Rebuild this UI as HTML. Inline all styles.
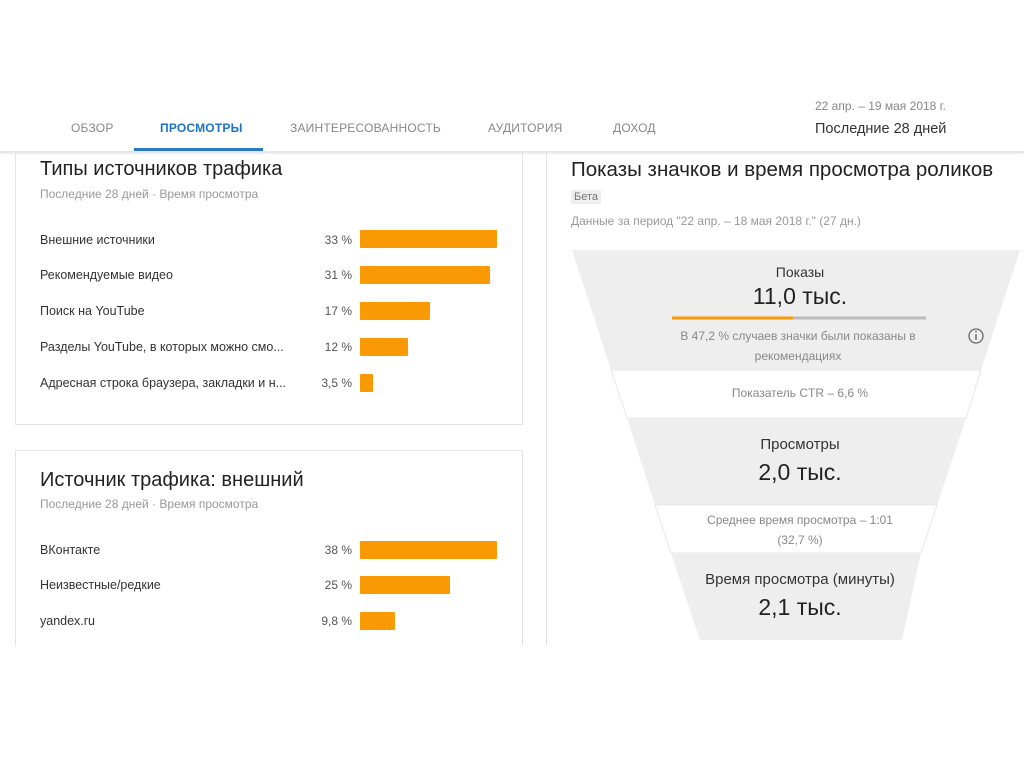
<!DOCTYPE html>
<html><head><meta charset="utf-8"><style>
*{margin:0;padding:0;box-sizing:border-box}
body{width:1024px;height:767px;background:#fff;font-family:"Liberation Sans",sans-serif;position:relative;overflow:hidden;color:#222}
.a{position:absolute;white-space:nowrap}
.tab{position:absolute;top:121px;font-size:12px;color:#888;letter-spacing:.2px}
.card{position:absolute;left:15px;width:508px;border:1px solid #e4e4e4;border-top:none}
.t{font-size:20px;color:#222}
.s{font-size:12px;color:#999}
.l{font-size:12.5px;color:#333}
.p{font-size:12px;color:#555;text-align:right;width:60px}
.bar{position:absolute;left:360px;height:18px;background:#f99a05;border-radius:1px}
</style></head><body>
<div class="tab" style="left:71px">ОБЗОР</div>
<div class="tab" style="left:160px;color:#1a73c8;font-weight:bold">ПРОСМОТРЫ</div>
<div class="tab" style="left:290px">ЗАИНТЕРЕСОВАННОСТЬ</div>
<div class="tab" style="left:488px">АУДИТОРИЯ</div>
<div class="tab" style="left:613px">ДОХОД</div>
<div class="a" style="left:134px;top:148px;width:129px;height:3px;background:#2a7ac4"></div>
<div class="a" style="left:815px;top:99px;font-size:12px;color:#888">22 апр. – 19 мая 2018 г.</div>
<div class="a" style="left:815px;top:121px;font-size:14.5px;color:#333">Последние 28 дней</div>
<div class="a" style="left:0;top:151px;width:1024px;height:2px;background:#e6e6e6;box-shadow:0 1px 2px rgba(0,0,0,.08)"></div>

<div class="card" style="top:153px;height:272px"></div>
<div class="a t" style="left:40px;top:158px">Типы источников трафика</div>
<div class="a s" style="left:40px;top:187px">Последние 28 дней · Время просмотра</div>
<div class="a l" style="left:40px;top:233px">Внешние источники</div>
<div class="a l" style="left:40px;top:268px">Рекомендуемые видео</div>
<div class="a l" style="left:40px;top:304px">Поиск на YouTube</div>
<div class="a l" style="left:40px;top:340px">Разделы YouTube, в которых можно смо...</div>
<div class="a l" style="left:40px;top:376px">Адресная строка браузера, закладки и н...</div>
<div class="a p" style="left:292px;top:233px">33 %</div>
<div class="a p" style="left:292px;top:268px">31 %</div>
<div class="a p" style="left:292px;top:304px">17 %</div>
<div class="a p" style="left:292px;top:340px">12 %</div>
<div class="a p" style="left:292px;top:376px">3,5 %</div>
<div class="bar" style="top:230px;width:137px"></div>
<div class="bar" style="top:266px;width:130px"></div>
<div class="bar" style="top:302px;width:70px"></div>
<div class="bar" style="top:338px;width:48px"></div>
<div class="bar" style="top:374px;width:13px"></div>

<div class="card" style="top:450px;height:196px;border-top:1px solid #e4e4e4;border-bottom:none"></div>
<div class="a t" style="left:40px;top:469px">Источник трафика: внешний</div>
<div class="a s" style="left:40px;top:497px">Последние 28 дней · Время просмотра</div>
<div class="a l" style="left:40px;top:543px">ВКонтакте</div>
<div class="a l" style="left:40px;top:578px">Неизвестные/редкие</div>
<div class="a l" style="left:40px;top:614px">yandex.ru</div>
<div class="a p" style="left:292px;top:543px">38 %</div>
<div class="a p" style="left:292px;top:578px">25 %</div>
<div class="a p" style="left:292px;top:614px">9,8 %</div>
<div class="bar" style="top:541px;width:137px"></div>
<div class="bar" style="top:576px;width:90px"></div>
<div class="bar" style="top:612px;width:35px"></div>

<div class="a" style="left:546px;top:153px;width:1px;height:493px;background:#e4e4e4"></div>

<div class="a" style="left:571px;top:158px;font-size:20.5px;color:#222">Показы значков и время просмотра роликов</div>
<div class="a" style="left:571px;top:190px;font-size:11px;color:#777;background:#eee;padding:1px 3px">Бета</div>
<div class="a s" style="left:571px;top:214px">Данные за период "22 апр. – 18 мая 2018 г." (27 дн.)</div>

<svg class="a" style="left:0;top:0" width="1024" height="767">
<polygon points="572,250 1020,250 981,370 611,370" fill="#eeeeee"/>
<polygon points="611,370 981,370 966,418 627,418" fill="#fff" stroke="#e8e8e8"/>
<polygon points="627,418 966,418 937,505 655,505" fill="#eeeeee"/>
<polygon points="655,505 937,505 921,553 671,553" fill="#fff" stroke="#e8e8e8"/>
<polygon points="671,553 921,553 902,640 700,640" fill="#eeeeee"/>
<line x1="672" y1="318" x2="793" y2="318" stroke="#f99a05" stroke-width="3"/>
<line x1="793" y1="318" x2="926" y2="318" stroke="#bbb" stroke-width="3"/>
<circle cx="976" cy="336" r="7" fill="none" stroke="#666" stroke-width="1.3"/>
<line x1="976" y1="334" x2="976" y2="340" stroke="#666" stroke-width="1.4"/>
<circle cx="976" cy="331.5" r=".9" fill="#666"/>
</svg>
<div class="a" style="left:572px;top:264px;width:456px;text-align:center;font-size:14px;color:#333">Показы</div>
<div class="a" style="left:572px;top:283px;width:456px;text-align:center;font-size:23px;color:#222">11,0 тыс.</div>
<div class="a" style="left:572px;top:326px;width:462px;text-align:center;font-size:12px;color:#888;line-height:20px;padding-right:10px">В 47,2 % случаев значки были показаны в<br>рекомендациях</div>
<div class="a" style="left:572px;top:386px;width:456px;text-align:center;font-size:12px;color:#888">Показатель CTR – 6,6 %</div>
<div class="a" style="left:572px;top:436px;width:456px;text-align:center;font-size:15px;color:#333">Просмотры</div>
<div class="a" style="left:572px;top:459px;width:456px;text-align:center;font-size:23px;color:#222">2,0 тыс.</div>
<div class="a" style="left:572px;top:510px;width:456px;text-align:center;font-size:12px;color:#888;line-height:20px">Среднее время просмотра – 1:01<br>(32,7 %)</div>
<div class="a" style="left:572px;top:571px;width:456px;text-align:center;font-size:15px;color:#333">Время просмотра (минуты)</div>
<div class="a" style="left:572px;top:594px;width:456px;text-align:center;font-size:23px;color:#222">2,1 тыс.</div>
</body></html>
